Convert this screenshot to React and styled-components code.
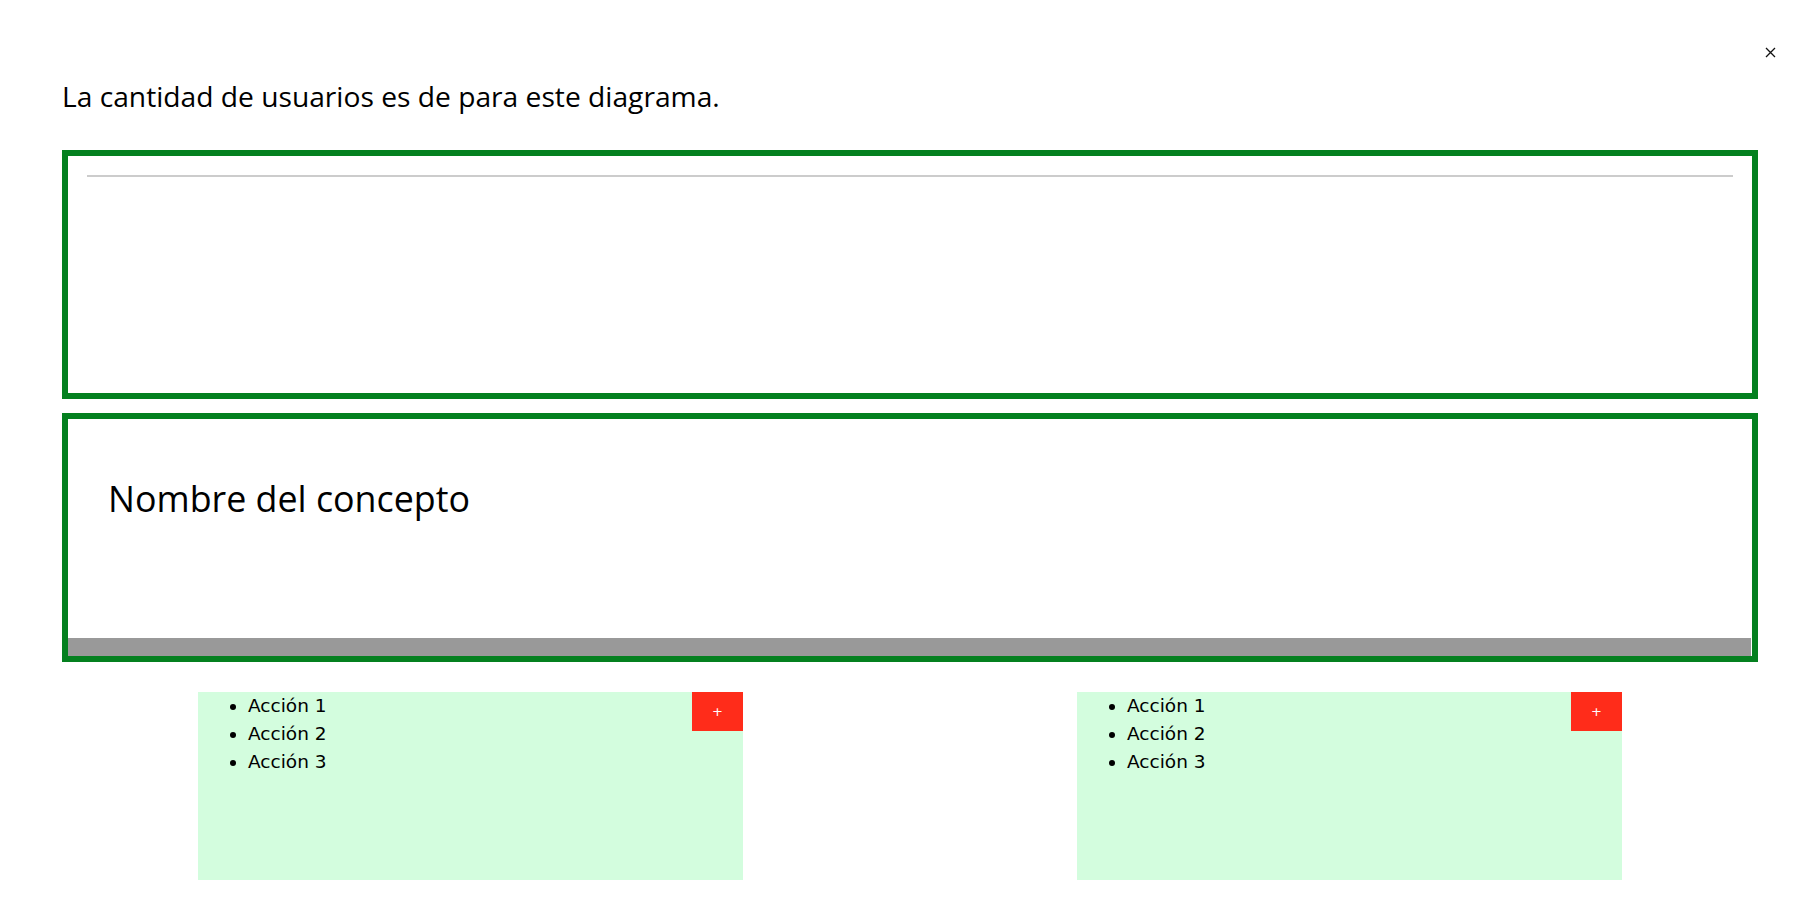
import React from "react";
import styled, { createGlobalStyle } from "styled-components";

const GlobalStyle = createGlobalStyle`
  * {
    box-sizing: border-box;
  }
  body {
    margin: 0;
    background: #ffffff;
    color: #000000;
    font-family: "Open Sans", "Noto Sans", sans-serif;
  }
`;

const Page = styled.div`
  position: relative;
  width: 100%;
  padding: 76px 51px 0 62px;
`;

const CloseButton = styled.button`
  position: absolute;
  top: 47px;
  right: 33px;
  width: 11px;
  height: 11px;
  padding: 0;
  border: none;
  background: transparent;
  display: flex;
  align-items: center;
  justify-content: center;
  cursor: pointer;
`;

const Intro = styled.p`
  margin: 0;
  font-size: 28.2px;
  line-height: 40px;
`;

const Panel = styled.div`
  height: 249px;
  margin-top: ${(props) => props.gap}px;
  border: 6px solid #04801f;
  display: flex;
  flex-direction: column;
  padding: ${(props) => props.pad};
`;

const Rule = styled.hr`
  margin: 0;
  height: 0;
  border: none;
  border-top: 2px solid #cccccc;
`;

const ConceptName = styled.h2`
  margin: 53px 0 0 40px;
  font-size: 35.8px;
  font-weight: 400;
  line-height: 52px;
  flex: 1;
`;

const Track = styled.div`
  height: 18px;
  margin-right: 1px;
  background: #999999;
`;

const Cards = styled.div`
  display: flex;
  justify-content: space-between;
  margin-top: 30px;
  padding: 0 136px;
`;

const Card = styled.div`
  position: relative;
  width: 545px;
  height: 188px;
  background: #d3fdde;
`;

const Actions = styled.ul`
  margin: 0;
  padding-left: 50px;
  font-family: "DejaVu Sans", Verdana, sans-serif;
  font-size: 18.5px;
  line-height: 28px;
`;

const AddButton = styled.button`
  position: absolute;
  top: 0;
  right: 0;
  width: 51px;
  height: 39px;
  border: none;
  background: #ff2c1a;
  color: #ffffff;
  font-family: "DejaVu Sans", sans-serif;
  font-size: 13px;
  padding: 0;
  cursor: pointer;
`;

const actions = ["Acción 1", "Acción 2", "Acción 3"];

const ActionCard = () => (
  <Card>
    <Actions>
      {actions.map((a) => (
        <li key={a}>{a}</li>
      ))}
    </Actions>
    <AddButton>+</AddButton>
  </Card>
);

const App = () => {
  return (
    <>
      <GlobalStyle />
      <Page>
        <CloseButton aria-label="Cerrar">
          <svg width="11" height="11" viewBox="0 0 11 11">
            <path d="M1 1L10 10M10 1L1 10" stroke="#111" strokeWidth="1.3" />
          </svg>
        </CloseButton>
        <Intro>La cantidad de usuarios es de para este diagrama.</Intro>
        <Panel gap={34} pad="19px 19px">
          <Rule />
        </Panel>
        <Panel gap={14} pad="0">
          <ConceptName>Nombre del concepto</ConceptName>
          <Track />
        </Panel>
        <Cards>
          <ActionCard />
          <ActionCard />
        </Cards>
      </Page>
    </>
  );
};

export default App;
